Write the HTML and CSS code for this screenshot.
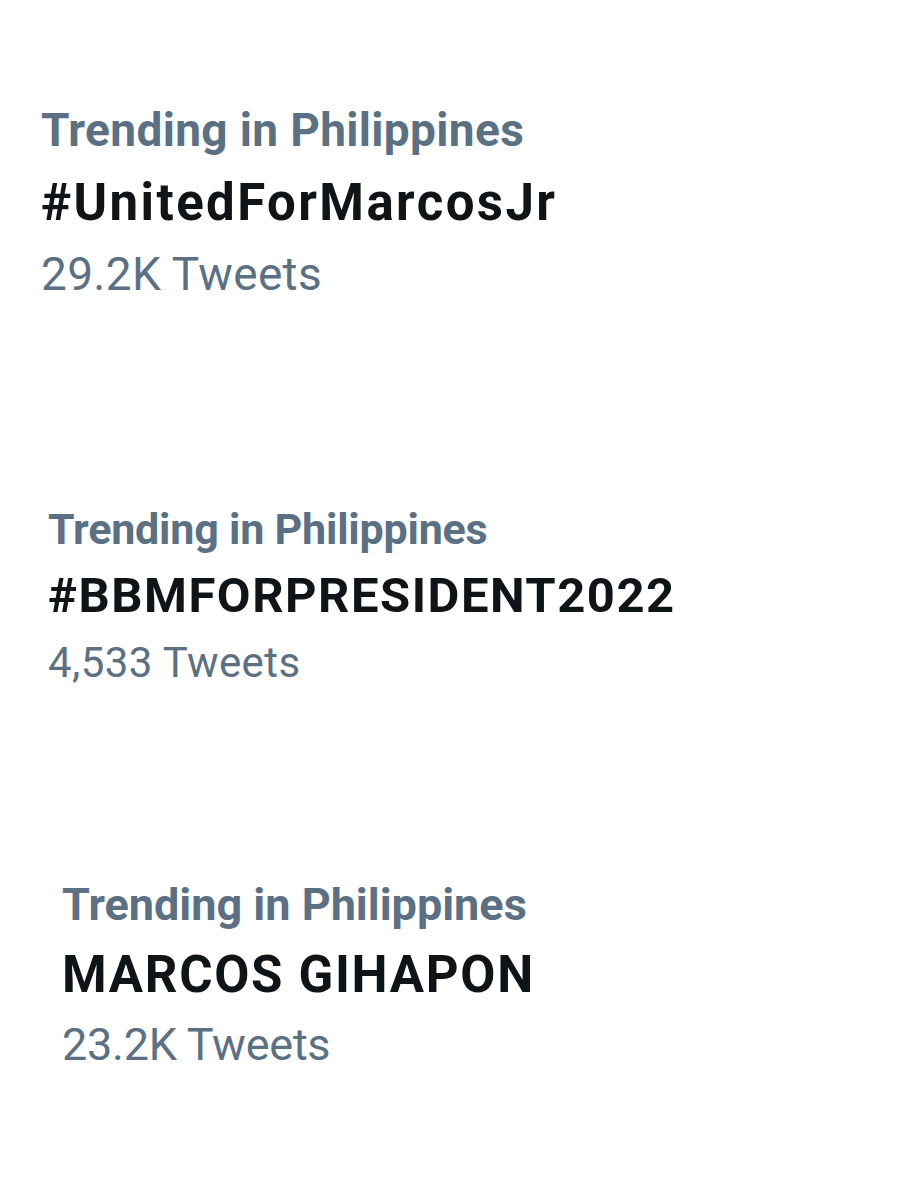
FILE: index.html
```html
<!DOCTYPE html>
<html lang="en">

<head>
    <meta charset="utf-8">
    <meta name="viewport" content="width=device-width, initial-scale=1">
    <title>Trending in Philippines</title>
    <link rel="stylesheet" href="styles.css">
</head>

<body>
    <div class="trends">
        <div class="trend trend-one">
            <div class="trend-label">Trending in Philippines</div>
            <div class="trend-title">#UnitedForMarcosJr</div>
            <div class="trend-count">29.2K Tweets</div>
        </div>

        <div class="trend trend-two">
            <div class="trend-label">Trending in Philippines</div>
            <div class="trend-title">#BBMFORPRESIDENT2022</div>
            <div class="trend-count">4,533 Tweets</div>
        </div>

        <div class="trend trend-three">
            <div class="trend-label">Trending in Philippines</div>
            <div class="trend-title">MARCOS GIHAPON</div>
            <div class="trend-count">23.2K Tweets</div>
        </div>
    </div>
</body>

</html>
```

FILE: styles.css
```css
body {
    background-color: #ffffff;
    font-family: Roboto, "Liberation Sans", sans-serif;
    margin: 0;
    padding: 0;
}

.trends {
    display: flex;
    flex-direction: column;
    padding-top: 93px;
}

.trend-label {
    color: #5b7083;
    font-weight: 700;
    font-size: 46px;
    line-height: 74px;
    letter-spacing: 0.35px;
}

.trend-title {
    color: #0f1419;
    font-weight: 700;
    font-size: 51px;
    line-height: 72px;
    letter-spacing: 2.4px;
}

.trend-count {
    color: #5b7083;
    font-weight: 400;
    font-size: 46px;
    line-height: 70px;
    letter-spacing: 0.3px;
}

.trend-one {
    padding-left: 41px;
}

.trend-two {
    margin-top: 187px;
    padding-left: 48px;
}

.trend-two .trend-label {
    font-size: 43px;
    line-height: 66px;
    letter-spacing: -0.2px;
}

.trend-two .trend-title {
    font-size: 49px;
    line-height: 68px;
    letter-spacing: 1.5px;
}

.trend-two .trend-count {
    font-size: 42px;
    line-height: 66px;
    letter-spacing: 0.4px;
}

.trend-three {
    margin-top: 174px;
    padding-left: 62px;
}

.trend-three .trend-label {
    font-size: 45px;
    line-height: 70px;
    letter-spacing: 0;
}

.trend-three .trend-title {
    font-size: 51px;
    line-height: 70px;
    letter-spacing: 1.7px;
}

.trend-three .trend-count {
    font-size: 45px;
    line-height: 70px;
    letter-spacing: -0.25px;
}
```
